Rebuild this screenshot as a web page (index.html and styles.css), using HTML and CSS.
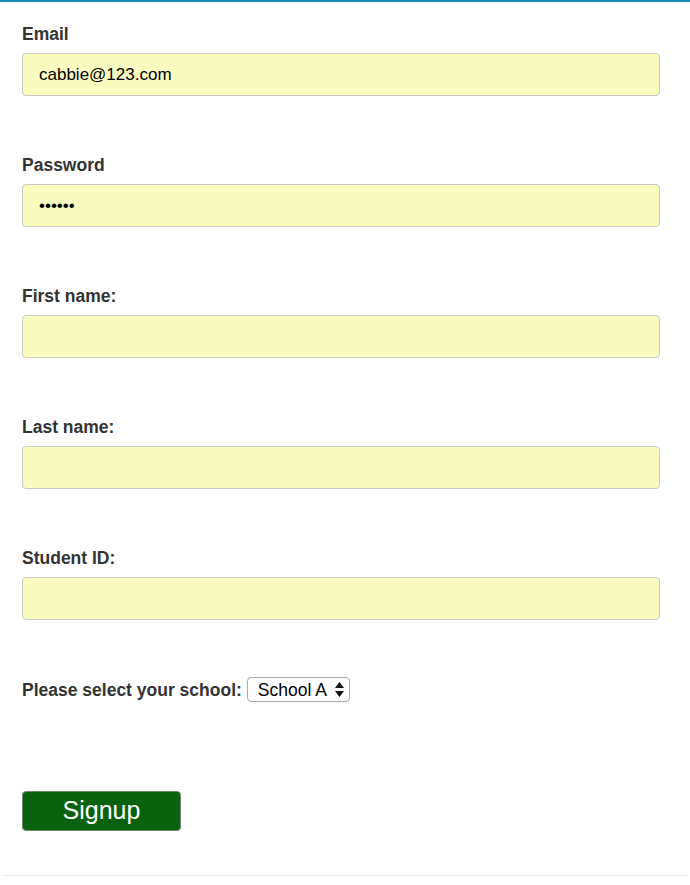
FILE: index.html
```html
<!DOCTYPE html>
<html>
<head>
<meta charset="utf-8">
<link rel="stylesheet" href="styles.css">
</head>
<body>
<div class="page">
  <form class="form">
    <div class="field">
      <label class="label">Email</label>
      <input class="input" type="text" value="cabbie@123.com">
    </div>
    <div class="field">
      <label class="label">Password</label>
      <input class="input" type="password" value="secret">
    </div>
    <div class="field">
      <label class="label">First name:</label>
      <input class="input" type="text">
    </div>
    <div class="field">
      <label class="label">Last name:</label>
      <input class="input" type="text">
    </div>
    <div class="field">
      <label class="label">Student ID:</label>
      <input class="input" type="text">
    </div>
    <div class="school-row">
      <label class="label inline">Please select your school:</label>
      <span class="select-wrap">
        <select class="select"><option>School A</option><option>School B</option></select>
        <svg class="arrows" width="9" height="15" viewBox="0 0 9 15"><path d="M4.5 0 L9 6 L0 6 Z M0 9 L9 9 L4.5 15 Z" fill="#111"/></svg>
      </span>
    </div>
    <div class="actions">
      <button class="btn" type="button">Signup</button>
    </div>
  </form>
  <div class="bottom-rule"></div>
</div>
</body>
</html>
```

FILE: styles.css
```css
html, body {
  margin: 0;
  padding: 0;
  background: #fff;
}
body {
  font-family: "Liberation Sans", Arial, sans-serif;
  color: #333;
}
.page {
  border-top: 2px solid #1b87b3;
  width: 690px;
  box-sizing: border-box;
}
.form {
  padding: 22px 30px 0 22px;
}
.field {
  display: flex;
  flex-direction: column;
  margin-bottom: 59px;
}
.label {
  font-size: 17.5px;
  font-weight: bold;
  line-height: 20px;
  color: #333;
  margin-bottom: 9px;
}
.input {
  height: 43px;
  box-sizing: border-box;
  width: 638px;
  background: #fafcc0;
  border: 1px solid #c9c9c9;
  border-radius: 4px;
  padding: 0 16px;
  font-family: "Liberation Sans", Arial, sans-serif;
  font-size: 17px;
  color: #000;
  outline: none;
  margin: 0;
}
.school-row {
  display: flex;
  align-items: center;
  gap: 5px;
  margin-top: -2px;
}
.label.inline {
  margin-bottom: 0;
}
.select-wrap {
  position: relative;
  display: inline-block;
}
.select {
  appearance: none;
  -webkit-appearance: none;
  height: 25px;
  box-sizing: border-box;
  width: 103px;
  border: 1px solid #a9a9a9;
  border-radius: 4px;
  background: #fff;
  font-family: "Liberation Sans", Arial, sans-serif;
  font-size: 17.5px;
  color: #000;
  padding: 0 0 0 10px;
  margin: 0;
}
.arrows {
  position: absolute;
  right: 6px;
  top: 5px;
  pointer-events: none;
}
.actions {
  margin-top: 89px;
}
.btn {
  width: 159px;
  height: 40px;
  background: #0b620e;
  border: 1px solid #6c8a6d;
  border-radius: 4px;
  color: #fff;
  font-family: "Liberation Sans", Arial, sans-serif;
  font-size: 25px;
  padding: 0 0 2px 0;
  margin: 0;
}
.bottom-rule {
  margin: 44px 3px 0 3px;
  height: 1px;
  background: #e8e8e8;
}
```
